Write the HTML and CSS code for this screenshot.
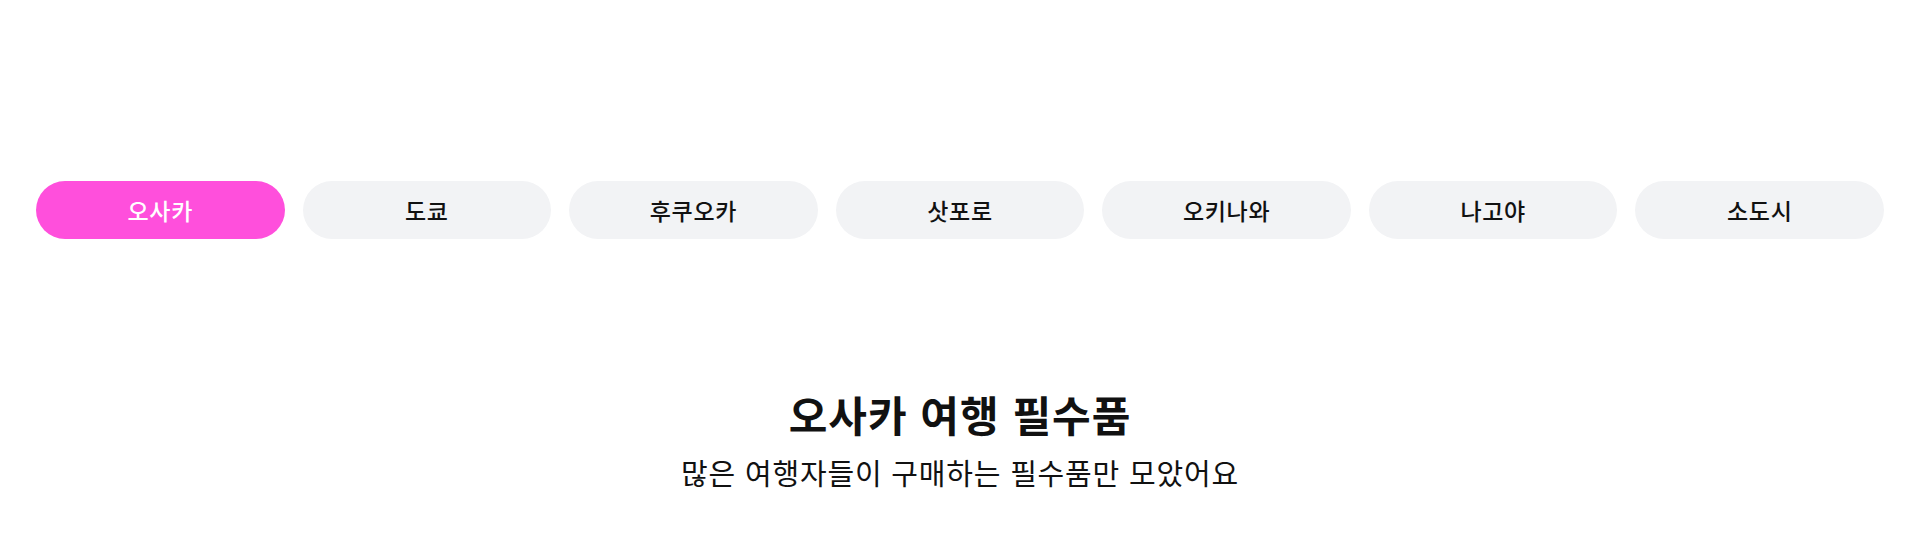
FILE: index.html
```html
<!DOCTYPE html>
<html lang="ko">

<head>
    <meta charset="UTF-8">
    <meta name="viewport" content="width=device-width, initial-scale=1.0">
    <title>여행 필수품</title>
    <link rel="stylesheet" href="styles.css">
</head>

<body>
    <div class="page">
        <!-- 도시 선택 탭 -->
        <nav class="tabs">
            <button class="tab active">오사카</button>
            <button class="tab">도쿄</button>
            <button class="tab">후쿠오카</button>
            <button class="tab">삿포로</button>
            <button class="tab">오키나와</button>
            <button class="tab">나고야</button>
            <button class="tab">소도시</button>
        </nav>

        <div class="heading">
            <h2 class="title">오사카 여행 필수품</h2>
            <p class="desc">많은 여행자들이 구매하는 필수품만 모았어요</p>
        </div>
    </div>
</body>

</html>
```

FILE: styles.css
```css
body {
    margin: 0;
    background: #fff;
    color: #111;
    font-family: "Noto Sans CJK KR", "Noto Sans", sans-serif;
}

.page {
    padding-top: 181px;
}

.tabs {
    display: flex;
    gap: 18px;
    padding: 0 36px;
}

.tab {
    flex: 1;
    height: 58px;
    border: 0;
    border-radius: 29px;
    background: #f2f3f5;
    color: #111;
    font-family: inherit;
    font-size: 23px;
    font-weight: 500;
    letter-spacing: 0.7px;
    cursor: pointer;
}

.tab.active {
    background: #ff4fdc;
    color: #fff;
}

.heading {
    margin-top: 147px;
    text-align: center;
}

.title {
    margin: 0;
    font-size: 42px;
    font-weight: 700;
    line-height: 56px;
    letter-spacing: 1px;
}

.desc {
    margin: 11px 0 0;
    font-size: 29px;
    font-weight: 400;
    line-height: 39px;
    letter-spacing: 0.8px;
}
```
